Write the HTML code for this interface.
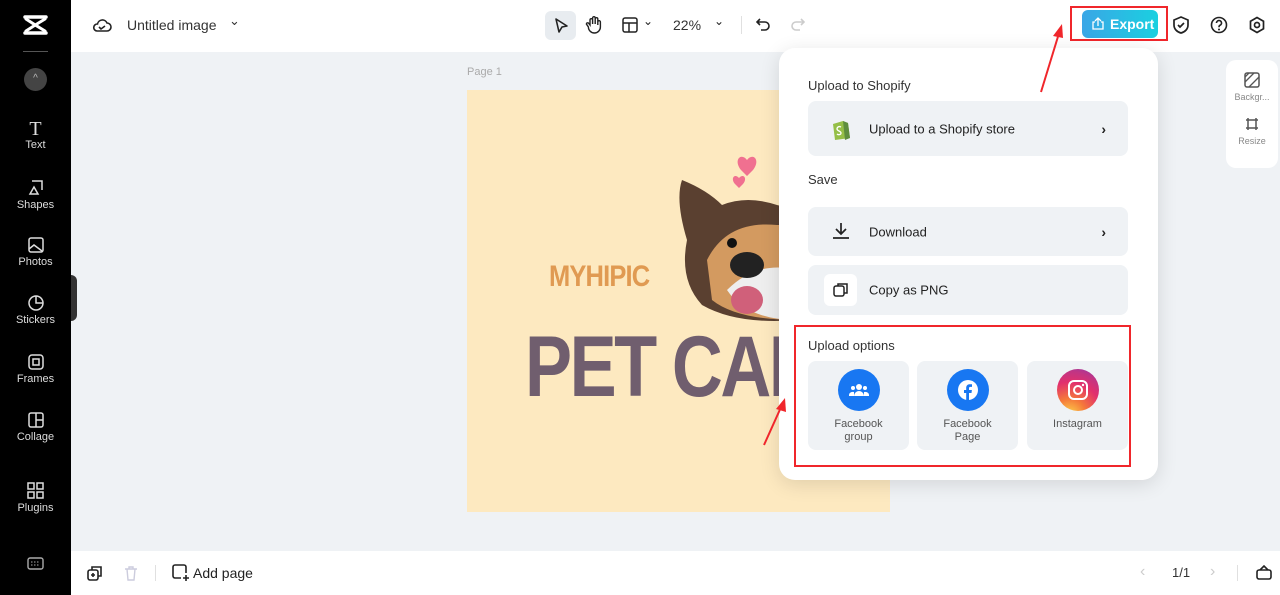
<!DOCTYPE html>
<html><head><meta charset="utf-8"><style>
*{box-sizing:border-box;margin:0;padding:0}
body{width:1280px;height:595px;overflow:hidden;font-family:"Liberation Sans",sans-serif;background:#eff2f5;position:relative;color:#222}
.abs{position:absolute}
#side{left:0;top:0;width:71px;height:595px;background:#000}
.si{position:absolute;left:0;width:71px;text-align:center;color:#ddd;font-size:11px}
.si svg{display:block;margin:0 auto 3px}
#top{left:71px;top:0;width:1209px;height:52px;background:#fff}
#bot{left:71px;top:551px;width:1209px;height:44px;background:#fff}
#page{left:467px;top:90px;width:423px;height:422px;background:#fde9c0;overflow:hidden}
#pop{left:779px;top:48px;width:379px;height:432px;background:#fff;border-radius:16px;box-shadow:0 4px 20px rgba(0,0,0,.12)}
.lbl{position:absolute;left:29px;font-size:13px;color:#333}
.row{position:absolute;left:29px;width:320px;background:#eff2f5;border-radius:8px;font-size:13px;color:#222}
.row span{position:absolute;left:61px;top:50%;transform:translateY(-50%)}
.row .ch{left:auto;right:22px;font-size:14px;font-weight:bold}
.tile{position:absolute;top:313px;width:101px;height:89px;background:#eff2f5;border-radius:8px;text-align:center;font-size:11px;color:#555;line-height:13px}
.tile .c{width:42px;height:42px;border-radius:50%;margin:8px auto 7px;display:flex;align-items:center;justify-content:center}
</style></head><body>
<div id="side" class="abs">
 <svg class="abs" style="left:23px;top:14px" width="25" height="22" viewBox="0 0 25 22"><path d="M2 3h21M2 19h21" stroke="#fff" stroke-width="3.5" stroke-linecap="round"/><path d="M3 5Q12 11 22 17M22 5Q12 11 3 17" stroke="#fff" stroke-width="3" fill="none" stroke-linecap="round"/></svg>
 <div class="abs" style="left:23px;top:51px;width:25px;height:1px;background:#555"></div>
 <div class="abs" style="left:24px;top:68px;width:23px;height:23px;border-radius:50%;background:#444;color:#bbb;font-size:10px;text-align:center;line-height:22px">^</div>
 <div class="si" style="top:119px"><span style="font-size:20px;font-family:'Liberation Serif';display:block;line-height:20px">T</span>Text</div>
 <div class="si" style="top:178px"><svg width="18" height="18"><path d="M5 3h10v9M3 16l4-7 4 7z" stroke="#ddd" fill="none" stroke-width="1.5"/></svg>Shapes</div>
 <div class="si" style="top:237px"><svg width="16" height="16"><rect x="1" y="1" width="14" height="14" rx="2" stroke="#ddd" fill="none" stroke-width="1.5"/><path d="M1 12l5-4 8 6" stroke="#ddd" fill="none" stroke-width="1.5"/></svg>Photos</div>
 <div class="si" style="top:295px"><svg width="16" height="16"><circle cx="8" cy="8" r="7" stroke="#ddd" fill="none" stroke-width="1.5"/><path d="M8 1v7h7" stroke="#ddd" fill="none" stroke-width="1.5"/></svg>Stickers</div>
 <div class="si" style="top:354px"><svg width="16" height="16"><rect x="1" y="1" width="14" height="14" rx="3" stroke="#ddd" fill="none" stroke-width="1.5"/><rect x="5" y="5" width="6" height="6" stroke="#ddd" fill="none" stroke-width="1.5"/></svg>Frames</div>
 <div class="si" style="top:412px"><svg width="16" height="16"><rect x="1" y="1" width="14" height="14" rx="2" stroke="#ddd" fill="none" stroke-width="1.5"/><path d="M8 1v14M8 8h7" stroke="#ddd" stroke-width="1.5"/></svg>Collage</div>
 <div class="si" style="top:482px"><svg width="17" height="17"><g stroke="#ddd" fill="none" stroke-width="1.5"><rect x="1" y="1" width="6" height="6"/><rect x="10" y="1" width="6" height="6"/><rect x="1" y="10" width="6" height="6"/><rect x="10" y="10" width="6" height="6"/></g></svg>Plugins</div>
 <svg class="abs" style="left:27px;top:557px" width="17" height="13"><rect x="1" y="1" width="15" height="11" rx="2" stroke="#aaa" fill="none" stroke-width="1.4"/><path d="M4 5h9M4 8h9" stroke="#aaa" stroke-dasharray="1.5 1.5"/></svg>
 <div class="abs" style="left:71px;top:275px;width:6px;height:46px;background:#333;border-radius:0 6px 6px 0"></div>
</div>
<div id="top" class="abs">
 <svg class="abs" style="left:21px;top:17px" width="20" height="16"><path d="M5 14h10a4 4 0 0 0 0-8 5 5 0 0 0-9.5 1A3.5 3.5 0 0 0 5 14z M7 10l2 2 4-3" stroke="#222" fill="none" stroke-width="1.6"/></svg>
 <div class="abs" style="left:56px;top:17px;font-size:14px;color:#333">Untitled image</div>
 <div class="abs" style="left:158px;top:13px;font-size:13px;color:#333">⌄</div>
 <div class="abs" style="left:474px;top:11px;width:31px;height:29px;background:#e8ecf0;border-radius:6px"></div>
 <svg class="abs" style="left:482px;top:17px" width="16" height="17"><path d="M3 2l11 7-5 1-3 5z" stroke="#222" fill="none" stroke-width="1.6" stroke-linejoin="round"/></svg>
 <svg class="abs" style="left:514px;top:15px" width="18" height="19"><path d="M5 10V5a1.3 1.3 0 0 1 2.6 0V9V3a1.3 1.3 0 0 1 2.6 0v6V4a1.3 1.3 0 0 1 2.6 0v6V7a1.3 1.3 0 0 1 2.6 0v5a6 6 0 0 1-12 0l-2-3a1.3 1.3 0 0 1 2-1z" stroke="#222" fill="none" stroke-width="1.4"/></svg>
 <svg class="abs" style="left:551px;top:17px" width="16" height="16"><rect x="1" y="1" width="14" height="14" rx="2" stroke="#222" fill="none" stroke-width="1.5"/><path d="M1 6h14M7 6v9" stroke="#222" stroke-width="1.5"/></svg>
 <div class="abs" style="left:572px;top:14px;font-size:12px">⌄</div>
 <div class="abs" style="left:602px;top:17px;font-size:14px;color:#333">22%</div>
 <div class="abs" style="left:643px;top:14px;font-size:12px">⌄</div>
 <div class="abs" style="left:670px;top:16px;width:1px;height:18px;background:#e0e0e0"></div>
 <svg class="abs" style="left:685px;top:17px" width="16" height="16"><path d="M4 2L1 5l3 3M1 5h8a4 4 0 0 1 0 8H5" stroke="#222" fill="none" stroke-width="1.6"/></svg>
 <svg class="abs" style="left:718px;top:17px" width="16" height="16"><path d="M12 2l3 3-3 3M15 5H7a4 4 0 0 0 0 8h4" stroke="#ccc" fill="none" stroke-width="1.6"/></svg>
 <div class="abs" style="left:999px;top:6px;width:98px;height:35px;border:2px solid #f0262b"></div>
 <div class="abs" style="left:1011px;top:10px;width:76px;height:28px;border-radius:6px;background:linear-gradient(90deg,#3aa6e6,#1ad0e0);color:#fff;font-size:14px;font-weight:bold;line-height:28px;padding-left:28px">Export</div>
 <svg class="abs" style="left:1021px;top:17px" width="12" height="13"><path d="M3 5H1v7h10V5H9M6 9V1M3 4l3-3 3 3" stroke="#fff" fill="none" stroke-width="1.3"/></svg>
 <svg class="abs" style="left:1101px;top:15px" width="18" height="20"><path d="M9 2l7 3v5c0 4-3 7-7 8-4-1-7-4-7-8V5z M6 10l2 2 4-4" stroke="#222" fill="none" stroke-width="1.7"/></svg>
 <svg class="abs" style="left:1139px;top:16px" width="18" height="18"><circle cx="9" cy="9" r="7.5" stroke="#222" fill="none" stroke-width="1.6"/><path d="M6.5 7a2.5 2.5 0 1 1 3.5 2.3c-1 .4-1 1-1 2" stroke="#222" fill="none" stroke-width="1.6"/><circle cx="9" cy="13.5" r="1" fill="#222"/></svg>
 <svg class="abs" style="left:1177px;top:16px" width="18" height="18"><path d="M9 1.5l6.5 3.75v7.5L9 16.5l-6.5-3.75v-7.5z" stroke="#222" fill="none" stroke-width="1.7"/><circle cx="9" cy="9" r="2.5" stroke="#222" fill="none" stroke-width="1.7"/></svg>
</div>
<div class="abs" style="left:467px;top:66px;font-size:11px;color:#aaa">Page 1</div>
<div id="page" class="abs">
 <svg class="abs" style="left:200px;top:50px" width="230" height="190">
  <path d="M20 100 Q8 60 15 40 Q40 50 55 65 Q80 55 110 65 L130 70 L130 180 Q70 185 35 165 Q12 140 20 100z" fill="#5a4030"/>
  <path d="M40 120 Q60 80 110 85 L130 85 L130 180 Q70 180 45 160z" fill="#d39a60"/>
  <path d="M60 150 Q90 120 130 130 L130 180 Q80 180 60 150z" fill="#eee"/>
  <ellipse cx="80" cy="125" rx="17" ry="13" fill="#222"/>
  <ellipse cx="80" cy="160" rx="16" ry="14" fill="#d0607a"/>
  <circle cx="65" cy="103" r="5" fill="#111"/>
  <path d="M80 20c-6-8-14 0-6 10l6 6 6-6c8-10 0-18-6-10z" fill="#f07090"/>
  <path d="M72 38c-4-5-9 0-4 6l4 4 4-4c5-6 0-11-4-6z" fill="#f07090"/>
 </svg>
 <div class="abs" style="left:82px;top:170px;font-size:30px;font-weight:bold;color:#e09a52;letter-spacing:-1px;transform:scaleX(.85);transform-origin:left">MYHIPIC</div>
 <div class="abs" style="left:58px;top:232px;font-size:86px;font-weight:bold;color:#705e6e;letter-spacing:-3px;line-height:90px;transform:scaleX(.82);transform-origin:left;white-space:nowrap">PET CARE</div>
</div>
<div class="abs" style="left:1226px;top:60px;width:52px;height:108px;background:#fff;border-radius:10px;font-size:9px;color:#888;text-align:center">
 <svg style="margin-top:12px" width="16" height="16"><rect x="1" y="1" width="14" height="14" rx="2" stroke="#555" fill="none" stroke-width="1.5"/><path d="M1 10L10 1M5 15L15 5M1 5l4-4" stroke="#555" stroke-width="1.3"/></svg>
 <div style="margin-top:2px">Backgr...</div>
 <svg style="margin-top:14px" width="16" height="16"><path d="M4 2v12M12 2v12M2 4h12M2 12h12" stroke="#555" fill="none" stroke-width="1.5"/></svg>
 <div style="margin-top:2px">Resize</div>
</div>
<div id="pop" class="abs">
 <div class="lbl" style="top:30px">Upload to Shopify</div>
 <div class="row" style="top:53px;height:55px"><svg class="abs" style="left:22px;top:17px" width="20" height="22"><path d="M3 6l10-3 5 2 2 15-15 2z" fill="#95bf47"/><path d="M13 3l5 2 2 15-5 2z" fill="#5e8e3e"/><path d="M11 9c-2-1-4 0-4 2 0 2 4 2 4 4 0 2-3 2-4 1" stroke="#fff" fill="none" stroke-width="1.3"/></svg><span>Upload to a Shopify store</span><span class="ch">›</span></div>
 <div class="lbl" style="top:124px">Save</div>
 <div class="row" style="top:159px;height:49px"><svg class="abs" style="left:24px;top:15px" width="18" height="18"><path d="M9 1v11M4 7l5 5 5-5M1 16h16" stroke="#222" fill="none" stroke-width="1.7"/></svg><span>Download</span><span class="ch">›</span></div>
 <div class="row" style="top:217px;height:50px"><div class="abs" style="left:16px;top:9px;width:33px;height:32px;background:#fff;border-radius:6px"></div><svg class="abs" style="left:25px;top:17px" width="16" height="16"><rect x="1" y="4" width="10" height="10" rx="2" stroke="#222" fill="none" stroke-width="1.5"/><path d="M5 4V2h9v9h-3" stroke="#222" fill="none" stroke-width="1.5"/></svg><span>Copy as PNG</span></div>
 <div class="abs" style="left:15px;top:277px;width:337px;height:142px;border:2px solid #f0262b"></div>
 <div class="lbl" style="top:290px">Upload options</div>
 <div class="tile" style="left:29px"><div class="c" style="background:#1877f2"><svg width="20" height="14"><circle cx="10" cy="4" r="3" fill="#fff"/><circle cx="4" cy="5" r="2" fill="#fff"/><circle cx="16" cy="5" r="2" fill="#fff"/><path d="M5 13a5 5 0 0 1 10 0zM0 12a4 3 0 0 1 5-3v4H0zM20 12a4 3 0 0 0-5-3v4h5z" fill="#fff"/></svg></div>Facebook<br>group</div>
 <div class="tile" style="left:138px"><div class="c" style="background:#1877f2"><svg width="22" height="22"><circle cx="11" cy="11" r="10" fill="#fff"/><path d="M12 21v-7h2.5l.4-3H12V9.3c0-.8.3-1.4 1.5-1.4H15V5.3c-.3 0-1.2-.1-2.2-.1-2.2 0-3.6 1.300-3.600 3.700V11H7v3h2.200v7z" fill="#1877f2"/></svg></div>Facebook<br>Page</div>
 <div class="tile" style="left:248px"><div class="c" style="background:radial-gradient(circle at 30% 110%,#fdd84a,#f5793a 30%,#e2306c 60%,#c13584 80%,#833ab4)"><svg width="22" height="22"><rect x="2" y="2" width="18" height="18" rx="5" stroke="#fff" fill="none" stroke-width="2"/><circle cx="11" cy="11" r="4" stroke="#fff" fill="none" stroke-width="2"/><circle cx="16" cy="6" r="1.2" fill="#fff"/></svg></div>Instagram</div>
</div>
<svg class="abs" style="left:0;top:0;pointer-events:none" width="1280" height="595">
 <path d="M1041 92L1060 30" stroke="#f0262b" stroke-width="2"/><path d="M1062 24l-9 12 10 2z" fill="#f0262b"/>
 <path d="M764 445L782 405" stroke="#f0262b" stroke-width="2"/><path d="M785 398l-9 11 10 3z" fill="#f0262b"/>
</svg>
<div id="bot" class="abs">
 <svg class="abs" style="left:16px;top:14px" width="16" height="16"><rect x="1" y="5" width="10" height="10" rx="2" stroke="#222" fill="none" stroke-width="1.6"/><path d="M5 5V2h9v9h-3M6 8v4M4 10h4" stroke="#222" fill="none" stroke-width="1.6"/></svg>
 <svg class="abs" style="left:53px;top:14px" width="14" height="16"><path d="M1 4h12M5 4V2h4v2M3 4l1 11h6l1-11" stroke="#ccd" fill="none" stroke-width="1.4"/></svg>
 <div class="abs" style="left:84px;top:14px;width:1px;height:16px;background:#e0e0e0"></div>
 <svg class="abs" style="left:101px;top:13px" width="17" height="17"><path d="M9 14H3a2 2 0 0 1-2-2V3a2 2 0 0 1 2-2h9a2 2 0 0 1 2 2v6M14 11v6M11 14h6" stroke="#222" fill="none" stroke-width="1.6"/></svg>
 <div class="abs" style="left:122px;top:14px;font-size:14px;color:#222">Add page</div>
 <div class="abs" style="left:1069px;top:12px;font-size:16px;color:#ccc">‹</div>
 <div class="abs" style="left:1101px;top:14px;font-size:13px;color:#333">1/1</div>
 <div class="abs" style="left:1139px;top:12px;font-size:16px;color:#ccc">›</div>
 <div class="abs" style="left:1166px;top:14px;width:1px;height:16px;background:#e0e0e0"></div>
 <svg class="abs" style="left:1185px;top:14px" width="16" height="15"><rect x="1" y="5" width="14" height="9" rx="2" stroke="#222" fill="none" stroke-width="1.6"/><path d="M4 5l4-4 4 4" stroke="#222" fill="none" stroke-width="1.6"/></svg>
</div>
</body></html>
